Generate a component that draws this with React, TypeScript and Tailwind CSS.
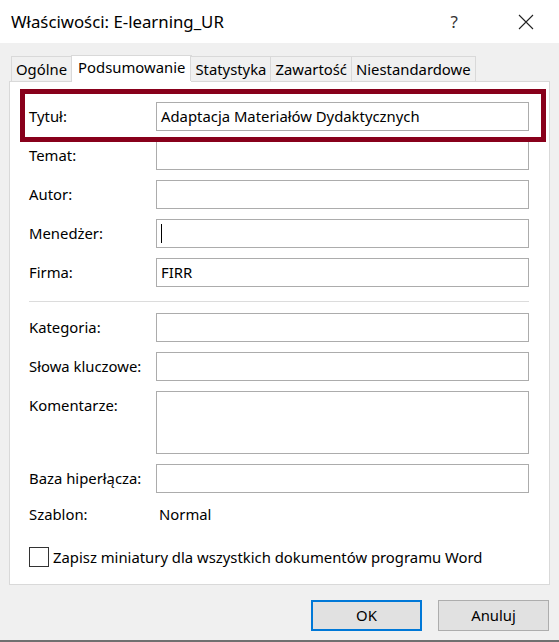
import React from 'react';

const font = { fontFamily: '"Noto Sans", "Open Sans", sans-serif' };

const tabs = ['Ogólne', 'Podsumowanie', 'Statystyka', 'Zawartość', 'Niestandardowe'];

function Field({ label, value, tall, caret }: { label: string; value?: string; tall?: boolean; caret?: boolean }) {
  return (
    <div className="flex items-start">
      <div className="w-[127px] h-[29px] flex items-center">{label}</div>
      <div
        className={`w-[373px] ${tall ? 'h-[63px]' : 'h-[29px]'} border border-[#acacac] bg-white flex items-start px-[4px]`}
      >
        <div className="h-[27px] flex items-center">
          {caret && <span className="inline-block w-px h-[19px] bg-black" />}
          {value}
        </div>
      </div>
    </div>
  );
}

export default function App() {
  return (
    <div className="w-[559px] h-[642px] bg-[#f0f0f0] flex flex-col text-[14.85px] text-black" style={font}>
      {/* title bar */}
      <div className="h-[43px] bg-white flex items-center pl-[11px] pr-[25px] shrink-0">
        <span className="text-[16.8px] flex-1">Właściwości: E-learning_UR</span>
        <span className="text-[17px] text-[#333] mr-[60px]">?</span>
        <svg width="16" height="16" viewBox="0 0 16 16">
          <path d="M1 1 L15 15 M15 1 L1 15" stroke="#222" strokeWidth="1.1" fill="none" />
        </svg>
      </div>

      {/* tabs */}
      <div className="flex items-end pl-[11px] mt-[11px] h-[27px] shrink-0 relative z-10">
        {tabs.map((t, i) =>
          i === 1 ? (
            <div
              key={t}
              className="h-[27px] px-[6px] bg-white border border-b-0 border-[#d9d9d9] -mx-px flex items-center -mb-px pb-[3px]"
            >
              {t}
            </div>
          ) : (
            <div
              key={t}
              className="h-[25px] px-[4px] bg-[#f0f0f0] border border-b-0 border-[#d9d9d9] flex items-center -ml-px first:ml-0"
            >
              {t}
            </div>
          )
        )}
      </div>

      {/* summary panel */}
      <div className="relative mx-[9px] h-[504px] bg-white border border-[#d9d9d9] shrink-0 pl-[19px] pt-[20px]">
        <div className="absolute left-[10px] top-[7px] w-[526px] h-[53px] border-[5px] border-[#88001b] pointer-events-none" />
        <div className="flex flex-col gap-[10px]">
          <Field label="Tytuł:" value="Adaptacja Materiałów Dydaktycznych" />
          <Field label="Temat:" />
          <Field label="Autor:" />
          <Field label="Menedżer:" caret />
          <Field label="Firma:" value="FIRR" />
        </div>
        <div className="w-[500px] h-px bg-[#dcdcdc] mt-[14px] mb-[11px]" />
        <div className="flex flex-col gap-[10px]">
          <Field label="Kategoria:" />
          <Field label="Słowa kluczowe:" />
          <Field label="Komentarze:" tall />
          <Field label="Baza hiperłącza:" />
        </div>
        <div className="flex items-center h-[20px] mt-[11px]">
          <span className="w-[130px]">Szablon:</span>
          <span>Normal</span>
        </div>
        <label className="flex items-center mt-[22px] gap-[4px]">
          <span className="w-[20px] h-[20px] border border-[#333] bg-white inline-block" />
          <span>Zapisz miniatury dla wszystkich dokumentów programu Word</span>
        </label>
      </div>

      {/* buttons */}
      <div className="flex justify-end gap-[16px] pr-[10px] mt-[15px]">
        <button className="w-[111px] h-[31px] bg-[#e1e1e1] border-2 border-[#0078d7]">OK</button>
        <button className="w-[111px] h-[31px] bg-[#e1e1e1] border border-[#adadad]">Anuluj</button>
      </div>
      <div className="mt-auto h-[2px] bg-[#707070]" />
    </div>
  );
}
